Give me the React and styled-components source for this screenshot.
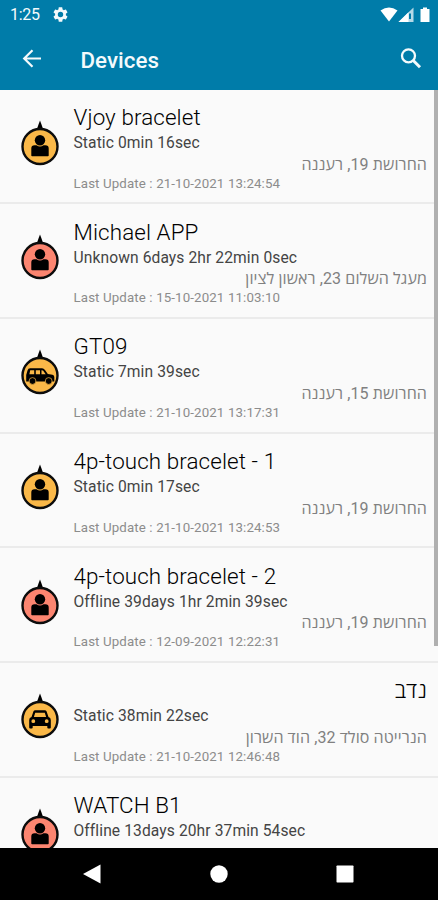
import React from "react";
import styled, { createGlobalStyle } from "styled-components";

const GlobalStyle = createGlobalStyle`
  *, *::before, *::after { box-sizing: border-box; }
  body { margin: 0; background: #fafafa; }
`;

const Screen = styled.div`
  width: 438px;
  height: 900px;
  display: flex;
  flex-direction: column;
  overflow: hidden;
  background: #fafafa;
  font-family: Roboto, "Open Sans", sans-serif;
`;

const Header = styled.header`
  flex: none;
  height: 89.5px;
  background: #007ca9;
  color: #f4fafc;
`;

const StatusBar = styled.div`
  height: 29px;
  padding: 0 8px 0 10px;
  display: flex;
  align-items: center;
`;

const Clock = styled.span`
  font-size: 16px;
  line-height: 20px;
  width: 42.5px;
  letter-spacing: -0.3px;
`;

const StatusIcons = styled.div`
  margin-left: auto;
  display: flex;
`;

const AppBar = styled.div`
  height: 60px;
  padding: 0 14px 0 20px;
  display: flex;
  align-items: center;
`;

const AppTitle = styled.h1`
  margin: 1px 0 0 35.5px;
  font-size: 22.3px;
  font-weight: 500;
  line-height: 28px;
  letter-spacing: 0.05px;
  flex: 1;
`;

const IconButton = styled.button`
  border: 0;
  padding: 0;
  background: none;
  color: inherit;
  display: flex;
`;

const ListArea = styled.main`
  flex: 1;
  min-height: 0;
  overflow: hidden;
  position: relative;
`;

const ScrollThumb = styled.div`
  position: absolute;
  top: 0;
  right: 0;
  width: 4px;
  height: 556px;
  background: #b0b0b0;
`;

const Row = styled.article`
  height: 114.7px;
  padding: 0 11px 0 21px;
  display: flex;
  border-bottom: 2px solid #ebebeb;
`;

const Marker = styled.svg`
  flex: none;
  width: 38px;
  height: 46px;
  margin: 30.3px 14.5px 0 0;
`;

const Details = styled.div`
  flex: 1;
  min-width: 0;
  padding-top: 12.4px;
`;

const Name = styled.h2`
  margin: 0;
  height: 30px;
  font-size: 22.4px;
  line-height: 30px;
  font-weight: 300;
  letter-spacing: 0.1px;
  color: #000;
  white-space: nowrap;
`;

const Status = styled.p`
  margin: 0;
  height: 21.7px;
  font-size: 15.6px;
  line-height: 23px;
  letter-spacing: 0.1px;
  color: #444;
  white-space: nowrap;
`;

const Address = styled.p`
  margin: 0;
  height: 20px;
  font-size: 16px;
  line-height: 21px;
  letter-spacing: 0.1px;
  color: #808080;
  white-space: nowrap;
`;

const Updated = styled.p`
  margin: 0;
  font-size: 13.3px;
  line-height: 20px;
  letter-spacing: 0.12px;
  color: #8c8c8c;
  white-space: nowrap;
`;

const NavBar = styled.nav`
  flex: none;
  height: 52.5px;
  background: #000;
  display: flex;
  align-items: center;
  padding: 0 84px 0 82px;
  justify-content: space-between;
`;

const Glyph = {
  person: (
    <g>
      <circle cx="19" cy="20.2" r="5.2" />
      <path d="M10.300 35.500V28.500Q10.300 25.200 13.600 25.200H15.500Q19 27.600 22.500 25.200H24.400Q27.700 25.200 27.700 28.500V35.500Q27.700 36.300 26.900 36.300H11.100Q10.300 36.300 10.300 35.500Z" />
    </g>
  ),
  jeep: (
    <g>
      <path
        fillRule="evenodd"
        d="M6.500 21.500Q7 19.300 9.200 19.300H21Q22.800 19.300 24 21L26.800 25L31.500 25.800Q33.300 26.200 33.300 28V32.500H5.200V26ZM9.200 21.200L8.400 25.300H13.200V21.200ZM14.800 21.200V25.300H19V21.200ZM20.500 21.200V25.300H24.700L22.200 21.700Q21.800 21.200 21 21.200Z"
      />
      <g stroke="#f9b846" strokeWidth="0.700">
        <circle cx="11.500" cy="32" r="3.400" />
        <circle cx="27.700" cy="32" r="3.400" />
      </g>
    </g>
  ),
  car: (
    <path
      fillRule="evenodd"
      d="M12.500 18.300Q13 17.200 14.300 17.200H23.700Q25 17.200 25.500 18.300L27.500 24Q29.800 24.700 29.800 27V34.500Q29.800 35.500 28.800 35.500H27.300Q26.300 35.500 26.300 34.500V33H11.700V34.500Q11.700 35.500 10.700 35.500H9.200Q8.200 35.500 8.200 34.500V27Q8.200 24.700 10.500 24ZM14.200 19.700L12.900 24H25.100L23.800 19.700ZM12.300 26.300A1.900 1.900 0 1 0 12.300 30.100A1.900 1.900 0 1 0 12.300 26.300ZM25.700 26.300A1.900 1.900 0 1 0 25.700 30.100A1.900 1.900 0 1 0 25.700 26.300Z"
    />
  ),
};

const colors = { amber: "#fab848", coral: "#fc8570" };

const devices = [
  { name: "Vjoy bracelet", status: "Static 0min 16sec", address: "החרושת 19, רעננה", updated: "21-10-2021 13:24:54", icon: "person", color: "amber" },
  { name: "Michael APP", status: "Unknown 6days 2hr 22min 0sec", address: "מעגל השלום 23, ראשון לציון", updated: "15-10-2021 11:03:10", icon: "person", color: "coral" },
  { name: "GT09", status: "Static 7min 39sec", address: "החרושת 15, רעננה", updated: "21-10-2021 13:17:31", icon: "jeep", color: "amber" },
  { name: "4p-touch bracelet - 1", status: "Static 0min 17sec", address: "החרושת 19, רעננה", updated: "21-10-2021 13:24:53", icon: "person", color: "amber" },
  { name: "4p-touch bracelet - 2", status: "Offline 39days 1hr 2min 39sec", address: "החרושת 19, רעננה", updated: "12-09-2021 12:22:31", icon: "person", color: "coral" },
  { name: "נדב", status: "Static 38min 22sec", address: "הנרייטה סולד 32, הוד השרון", updated: "21-10-2021 12:46:48", icon: "car", color: "amber" },
  { name: "WATCH B1", status: "Offline 13days 20hr 37min 54sec", icon: "person", color: "coral" },
];

function DeviceRow({ device }) {
  return (
    <Row>
      <Marker viewBox="0 0 38 46">
        <path d="M19 0.500L22.500 10H15.500Z" />
        <circle cx="19" cy="26.500" r="17.500" fill={colors[device.color]} stroke="#0c0c0c" strokeWidth="2.400" />
        {Glyph[device.icon]}
      </Marker>
      <Details>
        <Name dir="auto">{device.name}</Name>
        <Status>{device.status}</Status>
        {device.address && <Address dir="auto">{device.address}</Address>}
        {device.updated && <Updated>Last Update : {device.updated}</Updated>}
      </Details>
    </Row>
  );
}

export default function App() {
  return (
    <Screen>
      <GlobalStyle />
      <Header>
        <StatusBar>
          <Clock>1:25</Clock>
          <svg width="15" height="15" viewBox="2 2 20 20" fill="currentColor">
            <path d="M19.140 12.940c.04-.3.060-.61.060-.94 0-.32-.02-.64-.07-.94l2.030-1.580a.49.49 0 0 0 .12-.61l-1.920-3.320a.488.488 0 0 0-.59-.22l-2.390.96c-.5-.38-1.030-.7-1.620-.94l-.36-2.540a.484.484 0 0 0-.48-.41h-3.840c-.24 0-.43.17-.47.41l-.36 2.540c-.59.24-1.130.57-1.620.94l-2.390-.96c-.22-.08-.47 0-.59.22L2.740 8.870c-.12.21-.08.47.12.61l2.030 1.580c-.05.3-.09.63-.09.94s.02.64.07.94l-2.030 1.580a.49.49 0 0 0-.12.61l1.920 3.320c.12.22.37.29.59.22l2.390-.96c.5.38 1.030.7 1.620.94l.36 2.540c.05.24.24.41.48.41h3.840c.24 0 .44-.17.47-.41l.36-2.540c.59-.24 1.130-.56 1.620-.94l2.390.96c.22.08.47 0 .59-.22l1.920-3.320c.12-.22.07-.47-.12-.61zM12 15.600A3.600 3.600 0 1 1 12 8.400a3.600 3.600 0 0 1 0 7.200z" />
          </svg>
          <StatusIcons>
            <svg width="50" height="16" viewBox="0 0 50 16">
              <path d="M0.500 3.500Q9 -2.500 17.500 3.500L9 14.500Z" fill="#fff" />
              <path d="M33.500 0.500V15H18.500Z" fill="#b5d9e7" />
              <path d="M28.500 5.300V15H18.500Z" fill="#fff" />
              <path d="M29 6.500H31V12H29Z" fill="#007ca9" />
              <path d="M40.500 2H43V0.500H47V2H49.500V15H40.500Z" fill="#fff" />
            </svg>
          </StatusIcons>
        </StatusBar>
        <AppBar>
          <IconButton aria-label="Back">
            <svg width="25" height="24" viewBox="0 0 25 24" fill="none" stroke="currentColor" strokeWidth="2.200">
              <path d="M21 11.500H4.500M12.500 3.200L4.200 11.500L12.500 19.800" />
            </svg>
          </IconButton>
          <AppTitle>Devices</AppTitle>
          <IconButton aria-label="Search">
            <svg width="26" height="26" viewBox="0 0 26 26" fill="none" stroke="currentColor">
              <circle cx="10.500" cy="9.800" r="6.500" strokeWidth="2.300" />
              <path d="M15 14.300L22 21.300" strokeWidth="3" />
            </svg>
          </IconButton>
        </AppBar>
      </Header>
      <ListArea>
        {devices.map((device) => (
          <DeviceRow key={device.name} device={device} />
        ))}
        <ScrollThumb />
      </ListArea>
      <NavBar>
        <svg width="19" height="20" viewBox="0 0 19 20" fill="#fff">
          <path d="M1 10L18.500 0.500V19.500Z" />
        </svg>
        <svg width="18" height="18" viewBox="0 0 18 18" fill="#fff">
          <circle cx="9" cy="9" r="8.700" />
        </svg>
        <svg width="18" height="18" viewBox="0 0 18 18" fill="#fff">
          <rect x="0.500" y="0.500" width="17" height="17" rx="0.700" />
        </svg>
      </NavBar>
    </Screen>
  );
}
